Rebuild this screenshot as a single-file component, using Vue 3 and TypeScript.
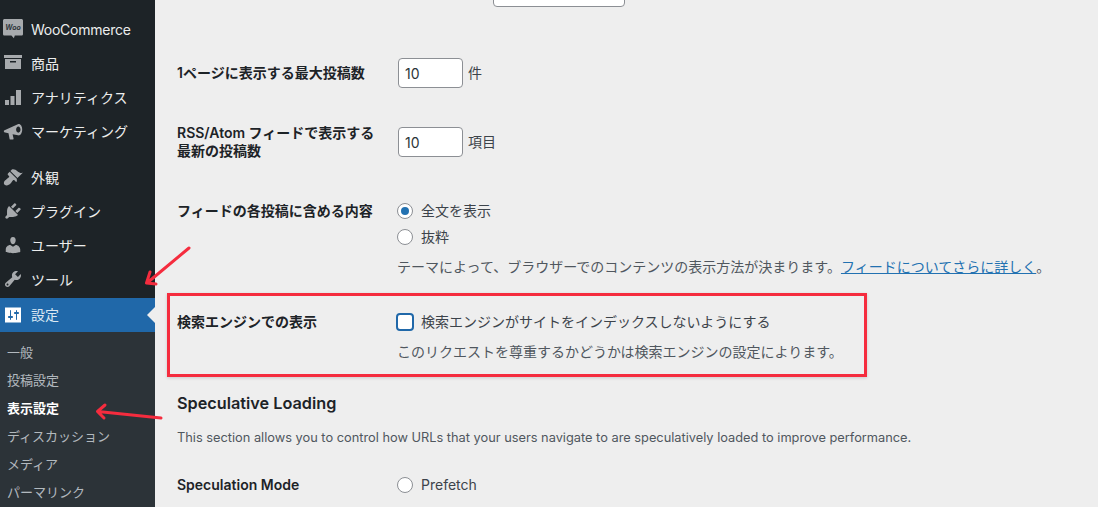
<script setup lang="ts">
interface MenuItem { label: string; path?: string; kind?: string; active?: boolean; gap?: boolean }
const menu: MenuItem[] = [
  { label: 'WooCommerce', kind: 'woo' },
  { label: '商品', kind: 'archive' },
  { label: 'アナリティクス', kind: 'chart' },
  { label: 'マーケティング', kind: 'mega' },
  { label: '外観', gap: true, path: 'M14.48 11.06L7.41 3.99l1.5-1.5c.5-.56 2.3-.47 3.51.32 1.21.8 1.43 1.28 2.91 2.1 1.18.64 2.45 1.26 4.45.85zm-.71.71L6.7 4.7 4.93 6.47c-.39.39-.39 1.02 0 1.41l1.06 1.06c.39.39.39 1.03 0 1.42-.6.6-1.43 1.11-2.21 1.69-.35.26-.7.53-1.01.84C1.43 13.26 0 16 1.7 17.7c1.69 1.7 4.45.26 5.81-1.1.31-.31.58-.66.85-1.02.57-.78 1.08-1.61 1.69-2.21.39-.39 1.02-.39 1.41 0l1.06 1.06c.39.39 1.02.39 1.41 0z' },
  { label: 'プラグイン', path: 'M13.11 4.36L9.87 7.6 8 5.73l3.24-3.24c.35-.34 1.05-.2 1.56.32.52.51.66 1.21.31 1.55zm-8 1.77l.91-1.12 9.01 9.01-1.19.84c-.71.71-2.63 1.16-3.82 1.16H6.14L4.9 17.26c-.59.59-1.54.59-2.12 0-.59-.58-.59-1.53 0-2.12l1.24-1.24v-3.88c0-1.13.4-3.19 1.09-3.89zm7.26 3.97l3.24-3.24c.34-.35 1.04-.21 1.55.31.52.51.66 1.21.31 1.55l-3.24 3.25z' },
  { label: 'ユーザー', path: 'M10 9.25c-2.27 0-2.73-3.44-2.73-3.44C7 4.02 7.82 2 9.97 2c2.16 0 2.98 2.02 2.71 3.81 0 0-.41 3.44-2.68 3.44zm0 2.57L12.72 10c2.39 0 4.52 2.33 4.52 4.53v2.49s-3.65 1.13-7.24 1.13c-3.65 0-7.24-1.13-7.24-1.13v-2.49c0-2.25 1.94-4.48 4.47-4.48z' },
  { label: 'ツール', path: 'M16.68 9.77c-1.34 1.34-3.3 1.67-4.95.99l-5.41 6.52c-.99.99-2.59.99-3.58 0s-.99-2.59 0-3.57l6.52-5.42c-.68-1.65-.35-3.61.99-4.95 1.28-1.28 3.12-1.62 4.72-1.06l-2.89 2.89 2.82 2.82 2.86-2.87c.53 1.58.18 3.39-1.08 4.65zM3.81 16.21c.4.39 1.04.39 1.43 0 .4-.4.4-1.04 0-1.43-.39-.4-1.03-.4-1.43 0-.39.39-.39 1.03 0 1.43z' },
  { label: '設定', active: true, path: 'M18 17.500V2.500H2v15zM8 11h1c.55 0 1 .45 1 1s-.45 1-1 1H8v1.500c0 .28-.22.5-.5.5s-.5-.22-.5-.5V13H6c-.55 0-1-.45-1-1s.45-1 1-1h1V5.500c0-.28.22-.5.5-.5s.5.22.5.5V11zm5-2h-1c-.55 0-1-.45-1-1s.45-1 1-1h1V5.500c0-.28.22-.5.5-.5s.5.22.5.5V7h1c.55 0 1 .45 1 1s-.45 1-1 1h-1v5.500c0 .28-.22.5-.5.5s-.5-.22-.5-.5V9z' },
]
const submenu = [
  { label: '一般' },
  { label: '投稿設定' },
  { label: '表示設定', current: true },
  { label: 'ディスカッション' },
  { label: 'メディア' },
  { label: 'パーマリンク' },
]
</script>

<template>
  <div class="page">
    <aside class="sidebar">
      <ul class="menu">
        <li v-for="item in menu" :key="item.label" class="item" :class="{ active: item.active, gap: item.gap, latin: item.kind === 'woo' }">
          <svg class="icon" viewBox="0 0 20 20" aria-hidden="true">
            <path v-if="item.path" :d="item.path" fill-rule="evenodd" />
            <template v-else-if="item.kind === 'woo'">
              <path d="M1.600 0h16.800c.9 0 1.600.7 1.600 1.600v13.300c0 .9-.7 1.600-1.600 1.600h-6.600l-.9 2.700-2.500-2.700H1.600c-.9 0-1.600-.7-1.600-1.600V1.600C0 .7.700 0 1.600 0z" />
              <text x="10" y="11" text-anchor="middle" class="woo-text">Woo</text>
            </template>
            <template v-else-if="item.kind === 'archive'">
              <path d="M1 2h18v3H1zM2 6h16v10H2zM7 8v1.500h6V8z" fill-rule="evenodd" />
            </template>
            <template v-else-if="item.kind === 'chart'">
              <path d="M2 13h4v5H2zM7.500 9h4v9h-4zM13 3h5v15h-5z" />
            </template>
            <template v-else>
              <path fill-rule="evenodd" d="M1 9.500 14.800 3.200c2.300-1 4.400 1.600 4.400 5.300s-2 6.500-4.200 5.800L9.600 13.200l1 4.600c.1.500-.2.800-.7.800H7.400c-.4 0-.7-.2-.8-.7l-1.100-5.600-3.500-.7C.9 11.400.6 10.100 1 9.500zM15.300 5.500c-1.200 0-2.200 1.400-2.200 3.100s1 3.100 2.200 3.100 2.200-1.400 2.200-3.100-1-3.100-2.200-3.100z" />
            </template>
          </svg>
          <span class="label">{{ item.label }}</span>
        </li>
      </ul>
      <ul class="submenu">
        <li v-for="sub in submenu" :key="sub.label" :class="{ current: sub.current }">{{ sub.label }}</li>
      </ul>
    </aside>

    <main class="content">
      <div class="top-field"><input class="top-input" type="text" aria-label="top" /></div>

      <section class="row row-posts">
        <div class="th">1ページに表示する最大投稿数</div>
        <div class="td inline"><input class="num" type="text" value="10" /><span class="unit">件</span></div>
      </section>

      <section class="row row-rss">
        <div class="th">RSS/Atom フィードで表示する<br />最新の投稿数</div>
        <div class="td inline"><input class="num" type="text" value="10" /><span class="unit">項目</span></div>
      </section>

      <section class="row row-feed">
        <div class="th">フィードの各投稿に含める内容</div>
        <div class="td">
          <label class="choice"><span class="radio on"></span>全文を表示</label>
          <label class="choice second"><span class="radio"></span>抜粋</label>
          <p class="desc">テーマによって、ブラウザーでのコンテンツの表示方法が決まります。<a>フィードについてさらに詳しく</a>。</p>
        </div>
      </section>

      <section class="row row-search">
        <div class="th">検索エンジンでの表示</div>
        <div class="td">
          <label class="choice"><span class="check"></span>検索エンジンがサイトをインデックスしないようにする</label>
          <p class="desc search-desc">このリクエストを尊重するかどうかは検索エンジンの設定によります。</p>
        </div>
      </section>

      <h2>Speculative Loading</h2>
      <p class="intro">This section allows you to control how URLs that your users navigate to are speculatively loaded to improve performance.</p>

      <section class="row row-mode">
        <div class="th">Speculation Mode</div>
        <div class="td"><label class="choice"><span class="radio"></span>Prefetch</label></div>
      </section>
    </main>

    <div class="highlight"></div>
    <svg class="arrows" viewBox="0 0 1098 507" aria-hidden="true">
      <path d="M189 248 147 283M150 272 146.500 283 156 284" />
      <path d="M161 418 98 411.500M105 405 97.500 411.500 104 418" />
    </svg>
  </div>
</template>

<style>
html, body { margin: 0; padding: 0; background: #eeeeee; }
</style>

<style scoped>
.page {
  position: relative;
  width: 1098px;
  height: 507px;
  overflow: hidden;
  display: flex;
  background: #eeeeee;
  color: #3c434a;
  font-family: Inter, "Noto Sans CJK JP", sans-serif;
  font-size: 14px;
}
.sidebar {
  width: 155px;
  flex: none;
  background: #1d2327;
  color: #f0f0f1;
  overflow: hidden;
}
ul { list-style: none; margin: 0; padding: 0; }
.menu { padding-top: 12px; }
.item {
  position: relative;
  height: 34px;
  display: flex;
  align-items: center;
  gap: 8px;
  padding-left: 3px;
  color: #eceded;
}
.item.gap { margin-top: 12px; }
.item.latin .label { letter-spacing: -0.25px; }
.icon { width: 20px; height: 20px; flex: none; fill: #a7aaad; }
.woo-text { font-size: 7px; font-weight: 700; fill: #33393e; font-style: italic; }
.item.active { margin-top: 2px; background: #2068a9; color: #dbe8f3; }
.item.active .label { margin-top: -2px; }
.item.active .icon { fill: #fff; }
.item.active::after {
  content: "";
  position: absolute;
  right: 0;
  top: 9px;
  border: 8px solid transparent;
  border-right-color: #eeeeee;
}
.submenu { background: #2c3338; padding-top: 7px; height: 200px; }
.submenu li {
  height: 28px;
  line-height: 27px;
  padding-left: 7px;
  font-size: 13px;
  color: rgba(240, 246, 252, 0.7);
}
.submenu li.current { color: #fff; font-weight: 700; }

.content { flex: 1; min-width: 0; padding-left: 22px; }
.top-field { height: 7px; padding-left: 316px; overflow: hidden; position: relative; }
.top-input {
  display: block;
  box-sizing: border-box;
  width: 132px;
  height: 30px;
  margin-top: -23px;
  background: #fff;
  border: 1px solid #8c8f94;
  border-radius: 4px;
}
.row { display: flex; }
.th {
  width: 220px;
  flex: none;
  color: #1d2327;
  font-weight: 600;
  line-height: 18px;
}
.td { flex: 1; min-width: 0; }
.inline { display: flex; align-items: center; gap: 5px; height: 30px; }
.unit { margin-top: -3px; }
.num {
  box-sizing: border-box;
  width: 65px;
  height: 30px;
  margin-left: 1px;
  padding: 0 6px;
  background: #fff;
  border: 1px solid #8c8f94;
  border-radius: 4px;
  color: #2c3338;
  font: inherit;
}
.row-posts { margin-top: 51px; }
.row-posts .th { padding-top: 6px; }
.row-rss { margin-top: 39px; }
.row-rss .th { margin-top: -3px; }
.row-feed { margin-top: 42px; }
.choice { display: flex; align-items: center; gap: 8px; height: 18px; line-height: 18px; }
.choice.second { margin-top: 8px; }
.radio {
  box-sizing: border-box;
  width: 16px;
  height: 16px;
  border: 1px solid #8c8f94;
  border-radius: 50%;
  background: #fff;
  display: flex;
  align-items: center;
  justify-content: center;
}
.radio.on::before { content: ""; width: 8px; height: 8px; border-radius: 50%; background: #2271b1; }
.check {
  box-sizing: border-box;
  width: 18px;
  height: 18px;
  margin-left: -1px;
  margin-right: -1px;
  border: 2px solid #2068a9;
  border-radius: 4px;
  background: #fff;
}
.desc { margin: 12px 0 0; font-size: 14px; line-height: 18px; color: #50575e; }
.desc a { color: #2271b1; text-decoration: underline; }
.row-search { margin-top: 37px; }
.search-desc { margin-top: 12px; }
h2 {
  margin: 32px 0 0;
  font-size: 16.250px;
  font-weight: 600;
  line-height: 20px;
  color: #1d2327;
}
.intro { margin: 16px 0 0; font-size: 12.800px; line-height: 18px; color: #50575e; }
.row-mode { margin-top: 29px; }

.highlight {
  position: absolute;
  left: 167px;
  top: 293px;
  width: 700px;
  height: 84px;
  box-sizing: border-box;
  border: 3px solid #f52c3e;
  box-shadow: 0 1px 3px rgba(0, 0, 0, 0.15);
}
.arrows {
  position: absolute;
  inset: 0;
  width: 1098px;
  height: 507px;
  fill: none;
  stroke: #f52c3e;
  stroke-width: 3;
  stroke-linecap: round;
  stroke-linejoin: round;
  pointer-events: none;
}
</style>
